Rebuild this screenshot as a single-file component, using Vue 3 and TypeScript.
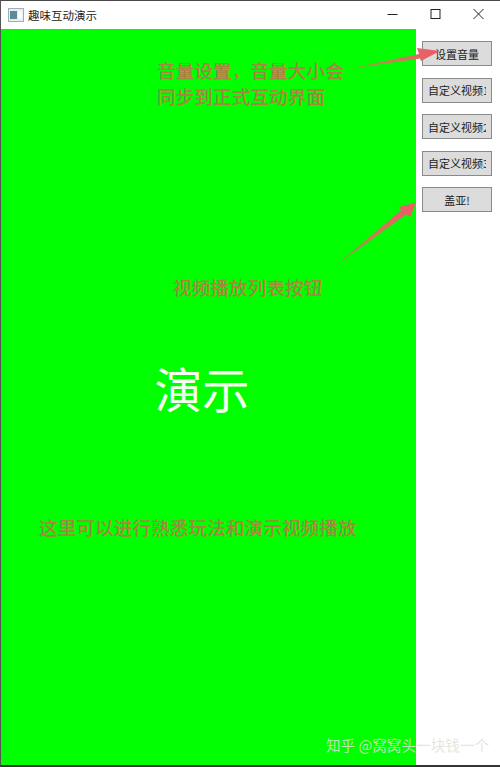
<script setup lang="ts">
const buttons: string[] = ['设置音量', '自定义视频1', '自定义视频2', '自定义视频3', '盖亚!']
</script>

<template>
  <div class="window">
    <header class="titlebar">
      <svg class="app-icon" width="16" height="14" viewBox="0 0 16 14">
        <rect x="0.5" y="0.5" width="15" height="13" fill="#e6eef2" stroke="#9fb0b8" />
        <rect x="2" y="3" width="7" height="8" fill="#5f8a96" />
        <rect x="10" y="3" width="4" height="8" fill="#fbfdfe" />
      </svg>
      <span class="title">趣味互动演示</span>
      <div class="controls">
        <svg class="ctl" width="43" height="28" viewBox="0 0 43 28"><path d="M16.5 13.5h10" stroke="#222" fill="none" /></svg>
        <svg class="ctl" width="43" height="28" viewBox="0 0 43 28"><rect x="17" y="8.5" width="9" height="9" stroke="#222" fill="none" /></svg>
        <svg class="ctl" width="43" height="28" viewBox="0 0 43 28"><path d="M16.5 8l10 10M26.5 8l-10 10" stroke="#222" fill="none" /></svg>
      </div>
    </header>
    <main class="body">
      <section class="stage">
        <p class="note note-volume">音量设置，音量大小会<br />同步到正式互动界面</p>
        <p class="note note-list">视频播放列表按钮</p>
        <p class="demo">演示</p>
        <p class="note note-play">这里可以进行熟悉玩法和演示视频播放</p>
      </section>
      <aside class="side">
        <button v-for="b in buttons" :key="b" class="btn" type="button"><span class="label">{{ b }}</span></button>
      </aside>
    </main>
    <svg class="arrows" width="500" height="767" viewBox="0 0 500 767">
      <defs>
        <linearGradient id="a1" gradientUnits="userSpaceOnUse" x1="352" y1="67" x2="440" y2="50">
          <stop offset="0" stop-color="#a89a48" />
          <stop offset="0.5" stop-color="#cf7a58" />
          <stop offset="1" stop-color="#f2556e" />
        </linearGradient>
        <linearGradient id="a2" gradientUnits="userSpaceOnUse" x1="336" y1="265" x2="416" y2="202">
          <stop offset="0" stop-color="#7fa53c" />
          <stop offset="0.5" stop-color="#cf7a58" />
          <stop offset="1" stop-color="#f2556e" />
        </linearGradient>
      </defs>
      <path d="M350 68.5L419 54L417 48L440 51L421 61L420 58.5Z" fill="url(#a1)" />
      <path d="M335 266L401 210.5L399 207L416 202.5L410 217L406 214.5Z" fill="url(#a2)" />
    </svg>
    <span class="mark">知乎 @窝窝头一块钱一个</span>
  </div>
</template>

<style>
html,
body {
  margin: 0;
  background: #fff;
}
</style>

<style scoped>
.window {
  position: relative;
  width: 500px;
  height: 767px;
  box-sizing: border-box;
  display: flex;
  flex-direction: column;
  overflow: hidden;
  background: #fff;
  border-top: 1px solid #4a4a4a;
  border-left: 1px solid #555;
  border-bottom: 2px solid #333;
  font-family: "Noto Sans CJK SC", "Liberation Sans", sans-serif;
}
.titlebar {
  height: 28px;
  display: flex;
  align-items: center;
  flex: none;
  padding-left: 7px;
}
.app-icon {
  flex: none;
  margin-right: 4px;
}
.title {
  font-size: 11.5px;
  color: #222;
}
.controls {
  margin-left: auto;
  display: flex;
  align-self: flex-start;
}
.ctl {
  display: block;
}
.body {
  flex: 1;
  display: flex;
  min-height: 0;
}
.stage {
  position: relative;
  width: 415px;
  flex: none;
  background: #00ff00;
}
.note {
  position: absolute;
  margin: 0;
  font-size: 18.7px;
  font-weight: 500;
  line-height: 26px;
  color: #a8853f;
  white-space: nowrap;
}
.note-volume {
  left: 156px;
  top: 28px;
}
.note-list {
  left: 172px;
  top: 245px;
}
.note-play {
  left: 38px;
  top: 485px;
}
.demo {
  position: absolute;
  margin: 0;
  left: 153.5px;
  top: 329px;
  font-size: 47.5px;
  line-height: 60px;
  color: #f4fff0;
  white-space: nowrap;
}
.side {
  flex: 1;
  display: flex;
  flex-direction: column;
  gap: 11.5px;
  padding: 12px 0 0 6px;
}
.btn {
  width: 70px;
  height: 25px;
  box-sizing: border-box;
  padding: 0;
  display: flex;
  align-items: center;
  justify-content: center;
  background: #dcdcdc;
  border: 1px solid #8a8a8a;
  border-radius: 0;
  font-family: inherit;
  font-size: 11px;
  color: #222;
}
.label {
  display: block;
  max-width: 58px;
  white-space: nowrap;
  overflow: hidden;
}
.arrows {
  position: absolute;
  left: -1px;
  top: -1px;
  pointer-events: none;
}
.mark {
  position: absolute;
  left: 325px;
  top: 734px;
  font-size: 14.6px;
  line-height: 20px;
  color: rgba(225, 225, 215, 0.85);
  white-space: nowrap;
}
</style>
